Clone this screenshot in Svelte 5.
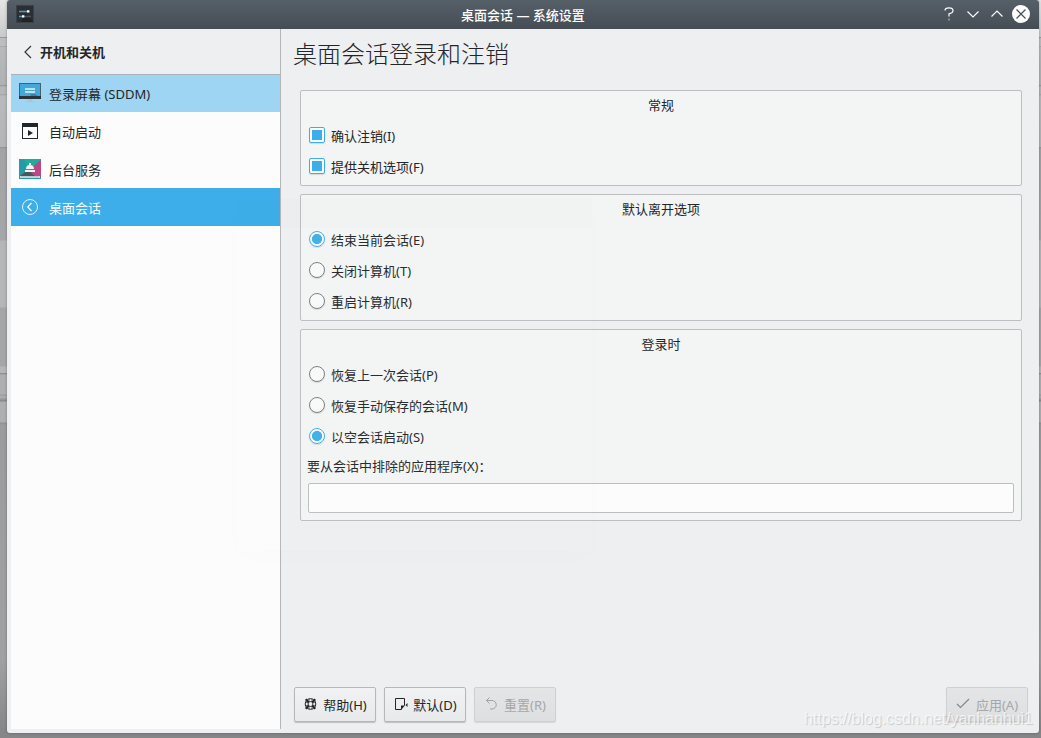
<script>
    let active = 3;
    let checks = [
        { label: "确认注销(I)", checked: true },
        { label: "提供关机选项(F)", checked: true },
    ];
    let leave = "E";
    let login = "S";
    let excluded = "";

    const pages = [
        { icon: "screen", label: "登录屏幕 (SDDM)" },
        { icon: "autostart", label: "自动启动" },
        { icon: "services", label: "后台服务" },
        { icon: "session", label: "桌面会话" },
    ];
    const leaveOptions = [
        { key: "E", label: "结束当前会话(E)" },
        { key: "T", label: "关闭计算机(T)" },
        { key: "R", label: "重启计算机(R)" },
    ];
    const loginOptions = [
        { key: "P", label: "恢复上一次会话(P)" },
        { key: "M", label: "恢复手动保存的会话(M)" },
        { key: "S", label: "以空会话启动(S)" },
    ];
</script>

<div class="desktop">
    <div class="window">
        <header>
            <svg class="app" width="18" height="18" viewBox="0 0 18 18">
                <rect x=".5" y=".5" width="17" height="17" fill="#2b2f33" stroke="#3b4147" />
                <path d="M9 8l8 8v1H5z" fill="#212427" />
                <path d="M3 6.5h9" stroke="#4a9cc6" stroke-width="1.4" />
                <path d="M3 11.5h4" stroke="#4a9cc6" stroke-width="1.4" />
                <path d="M8 11.5h7" stroke="#4c5358" stroke-width="1.4" />
                <path d="M11 5.2h2.4v2.4H11zM6 10.2h2.4v2.4H6z" fill="#fff" />
            </svg>
            <span class="caption">桌面会话 — 系统设置</span>
            <div class="controls">
                <svg width="18" height="18" viewBox="0 0 18 18"><path d="M5 5.5Q5 2.8 9 2.8T13 5.6Q13 8.3 9 8.8V11.5" /><path d="M9 13.5v2" opacity=".6" /></svg>
                <svg width="18" height="18" viewBox="0 0 18 18"><path d="M3.5 6.5l5.5 5.5 5.5-5.5" /></svg>
                <svg width="18" height="18" viewBox="0 0 18 18"><path d="M3.5 11.5l5.5-5.5 5.5 5.5" /></svg>
                <svg width="18" height="18" viewBox="0 0 18 18"><circle cx="9" cy="9" r="9" fill="#fcfcfc" stroke="none" /><path class="cross" d="M4.5 4.5l9 9m0-9l-9 9" /></svg>
            </div>
        </header>

        <div class="body">
            <aside>
                <div class="back">
                    <svg width="8" height="14" viewBox="0 0 8 14"><path d="M7 1L1 7l6 6" fill="none" stroke="#31363b" stroke-width="1.2" /></svg>
                    <b>开机和关机</b>
                </div>
                <nav>
                    {#each pages as page, i}
                        <button class="page" class:hover={i === 0} class:active={i === active} on:click={() => (active = i)}>
                            <svg width="22" height="22" viewBox="0 0 22 22">
                                {#if page.icon === "screen"}
                                    <path d="M0 0h22v16H0z" fill="#4d5f69" />
                                    <path d="M0 13h22v3H0z" fill="#2b3338" />
                                    <path d="M1 1h20v12H1z" fill="#3fa9de" />
                                    <path d="M11 11h5l3 2h-7z" fill="#2788b9" />
                                    <path d="M6 5h10v2H6zM6 8h10v2H6z" fill="#c9dde7" />
                                    <path d="M9 16h4v2h2v1H7v-1h2z" fill="#b4c2c9" />
                                {:else if page.icon === "autostart"}
                                    <path d="M3 3h16v16H3zM4 7v11h14V7z" fill="#232629" fill-rule="evenodd" />
                                    <path d="M9 10l5 3-5 3z" fill="#232629" />
                                {:else if page.icon === "services"}
                                    <path d="M0 1h22v20H0z" fill="#279aa8" />
                                    <path d="M5 1h17L9 13z" fill="#22ab99" />
                                    <path d="M22 2v18h-7l-6-7z" fill="#b84886" />
                                    <path d="M1 18l8-6 7 6z" fill="#4b575d" />
                                    <path d="M1 18h20v2H1z" fill="#d9dadd" />
                                    <path d="M2 18.5h18v.7H2z" fill="#aeb2bd" />
                                    <path d="M7 11q0-4 4-4t4 4zM10 5h2v2h-2zM6 12h10v2H6z" fill="#f2f3f5" />
                                {:else}
                                    <circle cx="11" cy="11" r="7.5" fill="none" stroke="#e4f3fb" />
                                    <path d="M12.5 7L8.7 11l3.8 4" fill="none" stroke="#fcfcfc" stroke-width="1.1" />
                                {/if}
                            </svg>
                            {page.label}
                        </button>
                    {/each}
                </nav>
            </aside>

            <main>
                <h1>桌面会话登录和注销</h1>

                <section>
                    <h2>常规</h2>
                    {#each checks as check}
                        <label><input type="checkbox" bind:checked={check.checked} />{check.label}</label>
                    {/each}
                </section>

                <section>
                    <h2>默认离开选项</h2>
                    {#each leaveOptions as option}
                        <label><input type="radio" value={option.key} bind:group={leave} />{option.label}</label>
                    {/each}
                </section>

                <section>
                    <h2>登录时</h2>
                    {#each loginOptions as option}
                        <label><input type="radio" value={option.key} bind:group={login} />{option.label}</label>
                    {/each}
                    <label class="field-label" for="excluded">要从会话中排除的应用程序(X)：</label>
                    <input id="excluded" type="text" bind:value={excluded} />
                </section>

                <footer>
                    <button>
                        <svg width="16" height="16" viewBox="0 0 16 16" fill="none" stroke="#232629">
                            <circle cx="8.5" cy="8" r="5.3" />
                            <circle cx="8.5" cy="8" r="2.5" />
                            <path d="M3.7 3.2l3 3m6.6-3l-3 3m3 6.6l-3-3m-6.6 3l3-3" stroke-width="2" />
                            <path d="M7 2.5v3m3-3v3m-3 5v3m3-3v3M3 6.5h3m-3 3h3m5-3h3m-3 3h3" stroke-width=".6" />
                        </svg>
                        帮助(H)
                    </button>
                    <button>
                        <svg width="16" height="16" viewBox="0 0 16 16">
                            <path d="M9.5 13.5h-6v-11h9v7" fill="none" stroke="#232629" />
                            <path d="M9 14v-4.5h4zM15.5 7v4l-2-2z" fill="#232629" />
                        </svg>
                        默认(D)
                    </button>
                    <button disabled>
                        <svg width="16" height="16" viewBox="0 0 16 16" fill="none" stroke="#a0a2a4"><path d="M6.5 1.5l-3 3 3 3M3.5 4.5H9a4.2 4.2 0 0 1 0 8.5H7" /></svg>
                        重置(R)
                    </button>
                    <button class="apply" disabled>
                        <svg width="16" height="16" viewBox="0 0 16 16" fill="none" stroke="#85878a"><path d="M2 8l3.5 3.5L14 3" stroke-width="1.2" /></svg>
                        应用(A)
                    </button>
                </footer>
            </main>
        </div>
    </div>

    <!-- screenshot dialog at the end of its fade-out -->
    <div class="fading" aria-hidden="true"></div>

    <div class="watermark">https://blog.csdn.net/yanhanhui1</div>
</div>

<style>
    :global(body) {
        margin: 0;
        overflow: hidden;
    }

    .desktop {
        position: relative;
        box-sizing: border-box;
        width: 1041px;
        height: 738px;
        padding: 0 2px 5px 7px;
        overflow: hidden;
        font: 13px "Noto Sans", "Noto Sans CJK SC", sans-serif;
        color: #232629;
        background: linear-gradient(#e6e6e6 0, #c9cacb 37px, #97989a 37px, #97989a 38px, #bdbec0 38px, #bdbec0 46px, #97989a 46px, #b9babc 47px, #b0b1b3 85px, #929395 85px, #b5b6b8 87px, #b5b6b8 94px, #a0a1a3 94px, #b9babb 96px, #b4b5b7 147px, #929395 147px, #a3a4a6 149px, #a5a6a8 240px, #b5b6b8 241px, #b5b6b8 307px, #a5a6a8 308px, #a5a6a8 366px, #b5b6b8 367px, #b5b6b8 373px, #858688 373px, #aeafb1 375px, #aeafb1 394px, #9b9c9e 395px, #b1b2b4 397px, #858688 401px, #aeafb1 402px, #aeafb1 422px, #8f9092 423px, #9b9c9e 425px, #a0a1a3 660px, #868688 733px);
    }

    .window {
        display: flex;
        flex-direction: column;
        height: 733px;
        background: #eeeff1;
        border-radius: 3px;
        box-shadow: 0 0 3px rgba(0, 0, 0, .3);
        overflow: hidden;
    }

    header {
        display: grid;
        grid-template-columns: 120px 1fr 120px;
        align-items: center;
        height: 29px;
        color: #fcfcfc;
        background: linear-gradient(#566069, #454c54);
    }

    .app {
        margin: -1px 0 0 9px;
    }

    .caption {
        text-align: center;
        font-weight: 500;
    }

    .controls {
        display: flex;
        justify-content: flex-end;
        gap: 6px;
        padding: 0 9px 1px 0;
    }

    .controls path {
        fill: none;
        stroke: #fcfcfc;
        stroke-width: 1.2;
    }

    .controls .cross {
        stroke: #475057;
    }

    .body {
        display: flex;
        flex: 1;
        padding-left: 4px;
    }

    aside {
        display: flex;
        flex-direction: column;
        width: 269px;
        height: 700px;
        border-right: 1px solid #b5b6b7;
    }

    .back {
        display: flex;
        align-items: center;
        gap: 8px;
        height: 45px;
        padding-left: 13px;
        border-bottom: 1px solid #a9b2b8;
    }

    nav {
        flex: 1;
        background: #fcfcfc;
    }

    button {
        font: inherit;
        color: inherit;
    }

    .page {
        display: flex;
        align-items: center;
        gap: 8px;
        width: 100%;
        height: 38px;
        padding: 0 8px;
        border: 0;
        background: none;
    }

    .page.hover {
        height: 37px;
        background: #9dd5f2;
    }

    .page.hover svg {
        margin-top: 1px;
    }

    .page.active {
        color: #fcfcfc;
        background: #3daee9;
    }

    main {
        display: flex;
        flex-direction: column;
        flex: 1;
        padding: 0 11px 11px 12px;
    }

    h1 {
        height: 51px;
        margin: 0 0 10px;
        font-size: 24px;
        font-weight: 300;
        line-height: 49px;
    }

    section {
        box-sizing: border-box;
        margin: 0 6px 8px 7px;
        padding: 0 7px 3px;
        background: #f3f5f4;
        border: 1px solid #bcbebf;
        border-radius: 2px;
    }

    h2 {
        height: 29px;
        margin: 0;
        font-size: 13px;
        font-weight: 400;
        line-height: 28px;
        text-align: center;
    }

    label {
        display: flex;
        align-items: center;
        gap: 6px;
        height: 31px;
        padding-left: 1px;
    }

    .field-label {
        height: 27px;
        margin-left: -1px;
        padding-left: 0;
    }

    input[type="checkbox"],
    input[type="radio"] {
        appearance: none;
        box-sizing: border-box;
        width: 16px;
        height: 16px;
        margin: 0 0 2px;
        padding: 2px;
        background: #f8f9f9;
        border: 1px solid #7b7e80;
        border-radius: 2px;
        box-shadow: 0 1px 1px rgba(0, 0, 0, .12);
    }

    input[type="radio"] {
        border-radius: 50%;
    }

    input[type="checkbox"]:checked,
    input[type="radio"]:checked {
        background: linear-gradient(#3daee9, #3daee9) content-box, #fcfcfc;
        border-color: #3daee9;
    }

    input[type="radio"]:checked {
        background: radial-gradient(circle, #3daee9 4.7px, #fcfcfc 5.4px);
    }

    input[type="text"] {
        display: block;
        box-sizing: border-box;
        width: 100%;
        height: 30px;
        margin: 4px 0;
        background: #fcfcfc;
        border: 1px solid #bcbebf;
        border-radius: 2px;
    }

    footer {
        display: flex;
        gap: 8px;
        margin: auto 0 0 1px;
    }

    footer button {
        display: flex;
        align-items: center;
        justify-content: center;
        gap: 5px;
        box-sizing: border-box;
        width: 82px;
        height: 35px;
        padding: 0 1px 0 0;
        white-space: nowrap;
        background: linear-gradient(#f1f2f3, #e8e9ea);
        border: 1px solid #b5b7b8;
        border-radius: 2px;
        box-shadow: 0 1px 1px rgba(0, 0, 0, .2);
    }

    footer svg {
        margin-bottom: 2px;
    }

    footer button:disabled {
        color: #a5a7a9;
        background: linear-gradient(#e4e5e7, #dedfe1);
        border-color: #cfd0d2;
        box-shadow: 0 1px 1px rgba(0, 0, 0, .1);
    }

    footer .apply {
        margin-left: auto;
    }

    .fading {
        position: absolute;
        left: 237px;
        top: 199px;
        width: 355px;
        height: 352px;
        border-radius: 3px;
        background: linear-gradient(rgba(49, 54, 59, .012) 29px, rgba(239, 240, 241, .03) 29px);
        box-shadow: 0 6px 24px rgba(0, 0, 0, .012);
        pointer-events: none;
    }

    .watermark {
        position: absolute;
        left: 804px;
        top: 710px;
        font: 16px/18px "Liberation Sans", sans-serif;
        letter-spacing: -.05px;
        color: rgba(255, 255, 255, .7);
        text-shadow: 1px 1px 1px rgba(0, 0, 0, .16);
        pointer-events: none;
    }
</style>
